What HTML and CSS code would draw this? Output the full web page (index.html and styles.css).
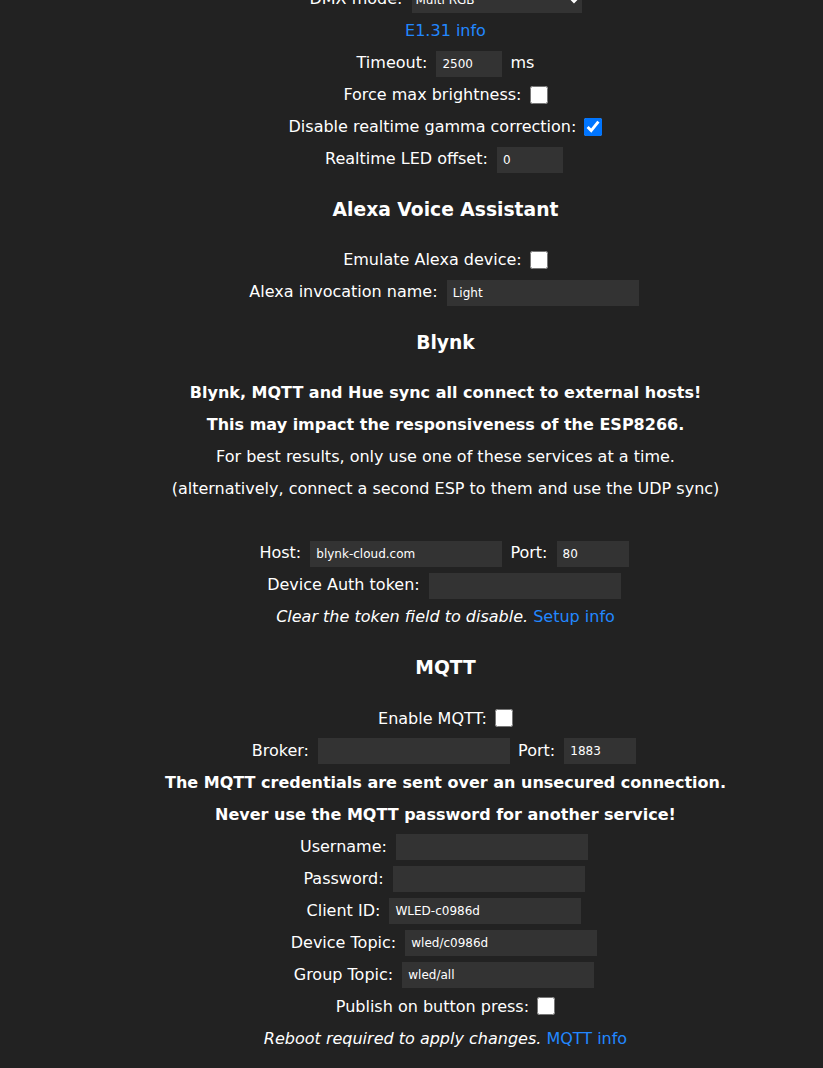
FILE: index.html
```html
<!DOCTYPE html>
<html lang="en">
<head>
    <meta charset="UTF-8">
    <meta name="viewport" content="width=device-width, initial-scale=1.0">
    <title>Sync Settings</title>
    <link rel="stylesheet" href="styles.css">
</head>
<body>
    <form class="settings">
        <div class="line">DMX mode: <select class="sel"><option>Multi RGB</option></select></div>
        <div class="line"><a href="#">E1.31 info</a></div>
        <div class="line">Timeout: <input class="num" type="text" value="2500"> ms</div>
        <div class="line">Force max brightness: <input type="checkbox"></div>
        <div class="line">Disable realtime gamma correction: <input type="checkbox" checked></div>
        <div class="line">Realtime LED offset: <input class="num" type="text" value="0"></div>

        <h3>Alexa Voice Assistant</h3>
        <div class="line">Emulate Alexa device: <input type="checkbox"></div>
        <div class="line">Alexa invocation name: <input class="txt" type="text" value="Light"></div>

        <h3>Blynk</h3>
        <div class="line"><b>Blynk, MQTT and Hue sync all connect to external hosts!</b></div>
        <div class="line"><b>This may impact the responsiveness of the ESP8266.</b></div>
        <div class="line">For best results, only use one of these services at a time.</div>
        <div class="line">(alternatively, connect a second ESP to them and use the UDP sync)</div>
        <div class="line"><br></div>
        <div class="line">Host: <input class="txt" type="text" value="blynk-cloud.com"> Port: <input class="port" type="text" value="80"></div>
        <div class="line">Device Auth token: <input class="txt" type="text"></div>
        <div class="line"><i>Clear the token field to disable. </i><a href="#">Setup info</a></div>

        <h3>MQTT</h3>
        <div class="line">Enable MQTT: <input type="checkbox"></div>
        <div class="line">Broker: <input class="txt" type="text"> Port: <input class="port" type="text" value="1883"></div>
        <div class="line"><b>The MQTT credentials are sent over an unsecured connection.</b></div>
        <div class="line"><b>Never use the MQTT password for another service!</b></div>
        <div class="line">Username: <input class="txt" type="text"></div>
        <div class="line">Password: <input class="txt" type="password"></div>
        <div class="line">Client ID: <input class="txt" type="text" value="WLED-c0986d"></div>
        <div class="line">Device Topic: <input class="txt" type="text" value="wled/c0986d"></div>
        <div class="line">Group Topic: <input class="txt" type="text" value="wled/all"></div>
        <div class="line">Publish on button press: <input type="checkbox"></div>
        <div class="line"><i>Reboot required to apply changes. </i><a href="#">MQTT info</a></div>
    </form>
</body>
</html>
```
FILE: styles.css
```css
body {
    margin: 0;
    background: #222;
    color: #fff;
    font-family: "DejaVu Sans", sans-serif;
    font-size: 16px;
    line-height: 32px;
    text-align: center;
}

.settings {
    margin-top: -17px;
    padding-left: 68px;
}

.line {
    height: 32px;
}

h3 {
    font-size: 18.72px;
    line-height: 32px;
    margin: 18.6px 0;
}

a {
    color: #28f;
    text-decoration: none;
}

input {
    background: #333;
    color: #fff;
    font-family: "DejaVu Sans", sans-serif;
    font-size: 12px;
    border: 0;
    padding: 0 6px;
    height: 26px;
    box-sizing: border-box;
    margin: 0 3px 0 4px;
    vertical-align: middle;
}

input[type="checkbox"] {
    width: 18px;
    height: 18px;
    margin: 0 0 0 3px;
    padding: 0;
    vertical-align: middle;
    position: relative;
    top: -1px;
}

.num {
    width: 66px;
}

.port {
    width: 72px;
}

.txt {
    width: 192px;
}

.sel {
    background: #333;
    color: #fff;
    border: 0;
    width: 170px;
    height: 26px;
    margin-left: 4px;
    font-size: 12px;
    font-family: "DejaVu Sans", sans-serif;
    vertical-align: middle;
}
```
